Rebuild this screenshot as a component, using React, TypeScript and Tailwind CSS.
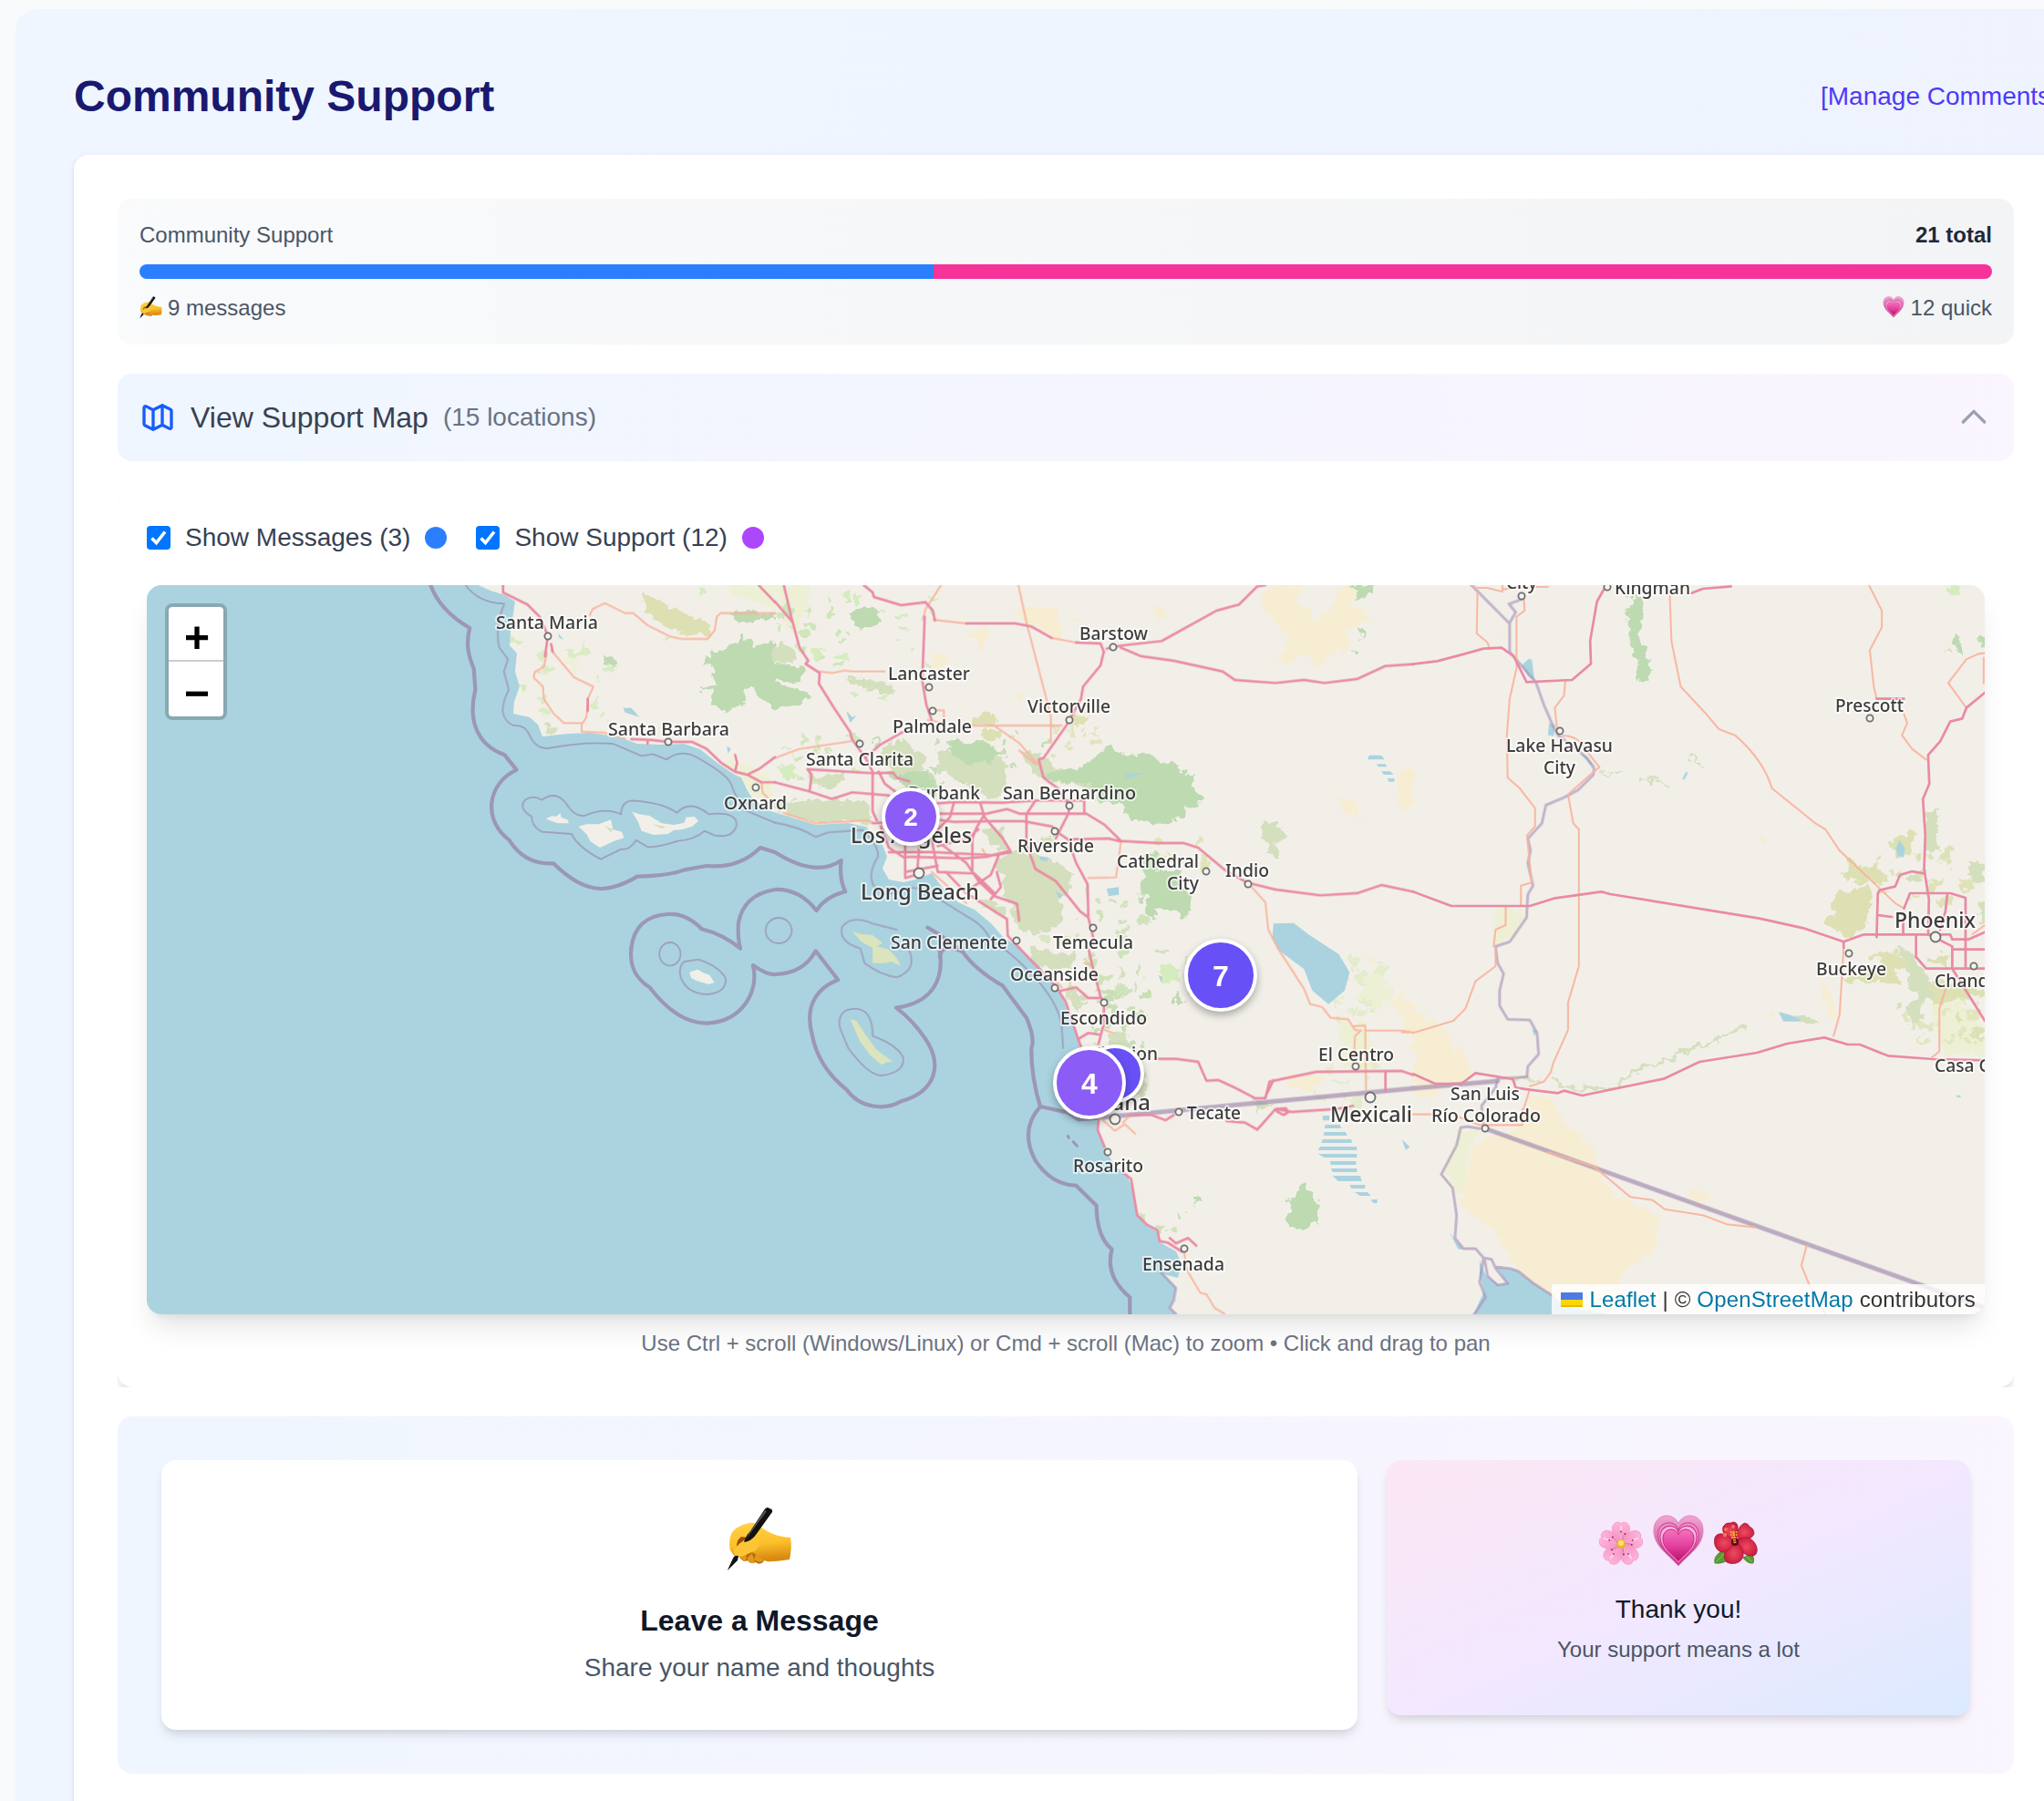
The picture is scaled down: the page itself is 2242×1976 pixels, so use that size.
import React from "react";

type Label = [text: string, x1: number, x2: number, baseline: number, size?: number];

const LABELS: Label[] = [
  ["Santa Maria", 544, 656, 689],
  ["Santa Barbara", 667, 800, 806],
  ["Oxnard", 794, 863, 887],
  ["Lancaster", 974, 1064, 745],
  ["Palmdale", 979, 1066, 803],
  ["Santa Clarita", 884, 1002, 839],
  ["Barstow", 1184, 1259, 701],
  ["Victorville", 1127, 1218, 781],
  ["San Bernardino", 1100, 1246, 876],
  ["Burbank", 996, 1075, 876],
  ["Los Angeles", 933, 1066, 924, 23],
  ["Riverside", 1116, 1200, 934],
  ["Long Beach", 944, 1074, 986, 23],
  ["Cathedral", 1225, 1315, 951],
  ["City", 1280, 1315, 975],
  ["Indio", 1344, 1392, 961],
  ["San Clemente", 977, 1105, 1040],
  ["Temecula", 1155, 1243, 1040],
  ["Oceanside", 1108, 1205, 1075],
  ["Escondido", 1163, 1258, 1123],
  ["El Cajon", 1197, 1270, 1162],
  ["Tijuana", 1178, 1262, 1217, 23],
  ["Tecate", 1302, 1361, 1227],
  ["Rosarito", 1177, 1254, 1285],
  ["Ensenada", 1253, 1343, 1393],
  ["El Centro", 1446, 1529, 1163],
  ["Mexicali", 1459, 1549, 1230, 23],
  ["San Luis", 1591, 1667, 1206],
  ["Río Colorado", 1570, 1690, 1230],
  ["Buckeye", 1992, 2069, 1069],
  ["Chandler", 2122, 2206, 1082],
  ["Casa Grande", 2122, 2238, 1175],
  ["Phoenix", 2078, 2167, 1017, 23],
  ["Prescott", 2013, 2088, 780],
  ["Lake Havasu", 1652, 1769, 824],
  ["City", 1693, 1728, 848],
  ["Kingman", 1771, 1854, 651],
  ["City", 1652, 1686, 645],
];

const TOWNS: [number, number, number?][] = [
  [601, 698], [733, 814], [829, 864], [1019, 754], [1023, 780], [943, 816], [1221, 710],
  [1173, 790], [1173, 884], [1157, 912], [1323, 956], [1369, 970], [1115, 1032], [1199, 1018],
  [1008, 958, 5.5], [1157, 1084], [1211, 1100], [1293, 1220], [1223, 1228, 5.5], [1215, 1264],
  [1299, 1370], [1487, 1170], [1503, 1204, 5.5], [1629, 1238], [2028, 1046], [2165, 1060],
  [2123, 1028, 5.5], [2051, 788], [1711, 802], [1763, 644], [1669, 654],
];

/* Areas sprinkled with small vegetation patches: x, y, width, height, count, colour */
const SCATTER: [number, number, number, number, number, string][] = [
  [590, 700, 90, 90, 16, "#dcebc6"],
  [850, 650, 90, 90, 22, "#cfe6b8"],
  [860, 800, 80, 60, 16, "#d4e6bd"],
  [920, 640, 110, 130, 14, "#d4ecbf"],
  [960, 800, 190, 70, 34, "#c8debb"],
  [1100, 920, 90, 140, 26, "#dbe6c4"],
  [1150, 760, 60, 90, 14, "#e2e4bf"],
  [1190, 960, 70, 170, 30, "#cfe3ba"],
  [1200, 1080, 60, 90, 18, "#c8dfb6"],
  [1270, 920, 60, 40, 8, "#e0e5b8"],
  [1280, 1040, 60, 60, 8, "#cfe3ba"],
  [1460, 1030, 60, 90, 22, "#e3eccb"],
  [1440, 1160, 70, 60, 14, "#e3eccb"],
  [2030, 930, 140, 60, 26, "#dfe2b8"],
  [2080, 1090, 90, 60, 22, "#e2e6bf"],
  [1240, 1330, 50, 30, 4, "#cfe3ba"],
];

const PATCHES = SCATTER.flatMap(([x, y, w, h, n, fill], region) => {
  let seed = 17 + region * 101;
  const next = () => {
    seed = (seed * 1103515245 + 12345) % 2147483648;
    return seed / 2147483648;
  };
  return Array.from({ length: n }, () => ({
    cx: x + next() * w,
    cy: y + next() * h,
    rx: 1.5 + next() * 5,
    ry: 1.5 + next() * 4,
    fill,
  }));
});

const NW = "translate(150 620) scale(0.44643 0.33333)";
const NC = "translate(850 620) scale(0.44643 0.33333)";
const NE = "translate(1550 620) scale(0.44133 0.33333)";
const SW = "translate(150 1040) scale(0.44643 0.33333)";
const SC = "translate(850 1040) scale(0.44643 0.33333)";
const SE = "translate(1550 1040) scale(0.44133 0.33333)";

function Land() {
  return (
    <g filter="url(#rough)">
      {/* sand */}
      <g fill="#f7edd3">
        <g transform={NC}>
          <path d="M600 140H700V200L708 240L680 235L640 200L585 170Z M482 210L520 205L525 260L500 285L485 250Z M385 290L425 295L420 330L388 335Z M930 135L962 150L960 180L930 165Z" />
          <path d="M1210 66H1290L1285 110L1320 180L1350 170L1395 66H1470L1440 100L1410 130L1465 180L1440 200L1400 215L1420 270L1380 290L1330 345L1310 290L1260 320L1230 310L1270 235L1235 200L1190 130Z" />
          <path d="M1525 690L1568 655V800L1540 810Z M1378 765L1420 775L1445 830L1400 815Z M590 425L610 430L605 450Z M720 165L745 185L725 190Z" />
        </g>
        <g transform={SC}>
          <path d="M1510 160L1545 150L1568 190V300L1545 290L1550 230L1520 190Z M1250 430L1345 415L1340 445L1300 468L1255 450Z M1460 30L1480 40L1465 60Z" />
        </g>
        <g transform={SE}>
          <path d="M0 205L65 260L105 320L150 410L110 445L40 490L0 495Z" />
          <path d="M290 490L350 500L365 560L390 610L408 595L450 680L470 760L520 830L612 880L608 1000L515 1070L505 1205H350L270 1070L200 940L115 845L140 690L170 630L275 590Z" />
          <path d="M680 810L710 795L750 830L720 840L690 825Z M870 220L905 200L890 235Z M1010 100L1040 130L1050 240L1030 210Z" />
        </g>
      </g>
      {/* farmland */}
      <g fill="#eef0d5">
        <g transform={NW}><path d="M1450 66H1568V150L1520 120L1470 100Z M1050 300L1090 310L1070 360Z M1440 640L1500 650L1560 700V800L1510 760Z" /></g>
        <g transform={NC}><path d="M0 66H90L60 200L40 240L20 160Z" /></g>
        <g transform={NE}><path d="M205 1130L280 1130L250 1230L200 1250Z M225 180L240 190L235 260Z M855 890L880 895L870 925Z" /></g>
        <g transform={SE}><path d="M110 600L165 610L130 700L125 820L100 780L75 745Z M1280 190L1360 170L1421 260V350H1320Z" /></g>
        <g transform={SC}><path d="M1470 60L1520 140L1490 200L1420 170Z M1380 240L1460 250L1470 420L1400 400Z" /></g>
      </g>
      {PATCHES.map((p, i) => (
        <ellipse key={i} {...p} />
      ))}
      {/* scrub */}
      <g fill="#d4dfbd">
        <g transform={NC}>
          <path d="M0 260L40 265L50 310L0 320Z M265 600L320 570L335 600L372 620L365 680L310 690L260 650Z M95 700L175 690L160 730L120 740L90 720Z M0 790L90 770L230 780L235 840L110 850L60 835L0 800Z" />
          <path d="M400 620L470 600L560 640L580 720L545 770L500 750L450 700L410 680Z M605 620L640 610L700 670L800 700L780 740L700 720L640 690Z M505 870L560 860L575 940L530 930Z M545 960L600 945L660 960L720 1000L730 1060L700 1100L705 1180L640 1220L600 1200L570 1100Z" />
          <path d="M640 900L700 905L690 935Z M480 1080L560 1120L570 1160L520 1130Z M1200 840L1230 850L1252 880L1230 920L1245 960L1225 965L1195 890Z M170 370L260 380L300 410L280 430L190 390Z" />
        </g>
        <g transform={SC}><path d="M620 0L700 20L740 10L730 60L680 80L630 40Z M720 100L760 160L750 210L720 180Z M820 280L860 270L870 320L830 330Z M870 380L910 400V500L880 480Z M1180 500L1225 510L1185 545Z M930 0L970 5L950 25Z M845 70L860 80L850 120Z" /></g>
        <g transform={NE}><path d="M1275 805H1303V940H1275Z M1370 985H1421V1050L1390 1040Z M1225 1020L1260 1015L1265 1040L1230 1045Z M1400 1100L1421 1110V1180H1405Z" /></g>
        <g transform={SE}><path d="M1205 0L1240 20L1280 100L1310 160L1260 180L1265 260L1245 250L1220 200L1250 160Z M1190 185L1215 190L1200 205Z M940 225L990 220L1010 260L980 250Z" /></g>
        <g transform={NW}><path d="M1005 525L1040 540L1010 550Z M1405 280L1450 290L1450 360L1415 350Z" /></g>
        <g fill="none" stroke="#d4dfbd" strokeWidth="3">
          <g transform={SE}><path d="M350 410L365 450L410 465L470 450L500 460L545 410L640 370L660 345L760 300L830 250M240 432H325" /></g>
          <g transform={NE}><path strokeWidth="2" d="M470 670L490 690H525M560 695L570 712L610 705L633 728M690 620L705 658H728" /></g>
        </g>
      </g>
      {/* military / olive */}
      <g fill="#dde0b2">
        <g transform={NW}><path d="M1250 80L1290 135L1340 150L1410 205L1405 238L1340 225L1280 195L1240 130Z" /></g>
        <g transform={NC}><path d="M485 495L545 500V530L485 525Z M515 540H550V580H515Z M720 480L780 500L760 540L735 520Z" /></g>
        <g transform={NE}><path d="M1190 900L1215 890L1250 875L1235 920L1210 960L1195 935Z M1045 1080L1135 1060V1170L1105 1210L1070 1220L1020 1180L1045 1160Z M1070 1020L1090 960L1105 1000L1155 975L1175 1040L1120 1050Z M1240 950L1265 960L1255 985Z M1325 275L1340 290L1330 300Z" /></g>
        <g transform={SE}><path d="M1140 20L1200 10L1235 60L1200 75L1205 120L1070 110L1085 85L1180 70Z M1270 50L1330 15V60Z M1290 100L1421 140V160L1340 170L1290 200Z M1380 265L1421 270V310Z M1360 210L1370 230L1355 245Z" /></g>
      </g>
      {/* forest */}
      <g fill="#bddab1">
        <g transform={NW}><path d="M1400 285L1450 270L1490 240L1530 265L1568 250V480L1500 400L1490 450L1455 485L1415 460L1420 420L1385 400L1420 400Z M1140 295L1175 305L1160 335Z M1465 150L1568 155V185L1480 180Z" /></g>
        <g transform={NC}>
          <path d="M0 325L50 320L75 350L65 375L20 380L0 370Z M0 390L60 410L100 435L60 450L0 470Z M185 150L240 140L255 160L250 190L220 215L190 200Z" />
          <path d="M425 580L500 580L545 600L540 640L480 660L440 640Z M650 690L740 670L780 640L815 598L860 625L930 630L985 665L1030 690L1025 730L1055 775L1010 800L990 840L935 855L870 835L850 790L790 775L770 720L680 715Z" />
          <path d="M905 945L940 940L935 1005H1000L998 1060L1025 1080L1015 1170L980 1130L940 1130L935 1165L912 1150V1100L898 1095Z M1415 66H1470L1460 95L1430 110Z M1435 205L1443 210V240H1435Z M1420 280L1432 285L1425 300Z" />
          <path d="M290 690L350 680L400 720L390 760L330 740Z" />
        </g>
        <g transform={SC}><path d="M1300 775L1318 800L1335 850V900L1320 925L1290 935L1262 900L1265 870L1260 820L1280 815Z M990 150L1010 180L975 180Z M1030 820L1050 830L1025 845Z M990 870L1005 872L998 885Z" /></g>
        <g transform={NE}><path d="M540 105H570L577 130L570 215L555 235L575 270L590 330L583 382L562 378L552 300L535 230Z M1345 230L1365 225L1360 295L1345 260Z M1405 240L1421 240V270Z" /></g>
      </g>
      <g fill="#d5ecbe">
        <g transform={NC}><path d="M90 270L118 275L115 310L90 315Z M150 290L180 290L178 320L152 318Z M165 90L185 90V108H168Z M60 700L20 690L40 670Z M0 670L40 650L30 690Z M185 660L210 670L200 690Z" /></g>
        <g transform={SC}><path d="M945 60L1000 65V105L950 118Z" /></g>
        <g transform={NE}><path d="M1325 68H1362L1355 98L1330 95Z" /></g>
        <g transform={NW}><path d="M915 240L950 245L935 265L915 262Z M940 395L960 400L945 430Z M1375 70L1400 90L1395 105L1378 90Z M1295 235L1310 240L1300 260Z" /></g>
      </g>
    </g>
  );
}

function Water() {
  return (
    <g fill="#aad3df">
      <path d="M525 642L538 648L554 653L565 660L563 673L560 693L559 708L567 717L565 737L570 753L564 770L563 783L581 787L590 795L595 808L623 805L646 804L677 808L699 816L726 817L750 816L768 822L788 838L806 850L813 853L820 868L826 877L846 890L872 898L895 905L930 903L950 907L957 915L968 927L973 940L968 953L975 965L991 968L1004 965L1022 958L1033 973L1051 990L1069 998L1087 1013L1100 1028L1118 1040L1140 1060L1158 1082L1169 1103L1178 1127L1185 1148L1186 1170L1192 1197L1203 1227L1205 1243L1212 1260L1223 1280L1236 1288L1243 1307L1247 1333L1258 1345L1270 1352L1272 1363L1290 1373L1296 1387L1292 1402L1276 1398L1290 1413L1287 1427L1283 1435L1290 1442H161V642Z" />
      <path d="M1617 1442L1623 1427L1628 1417L1623 1400V1383L1630 1400L1645 1410L1653 1408L1645 1395L1640 1390L1663 1394L1682 1408L1703 1422L1720 1434L1765 1442Z" />
      <g transform={NC}><path d="M1225 1180L1275 1178L1310 1215L1385 1280L1412 1340L1400 1400L1360 1445L1320 1400L1300 1330L1240 1270L1222 1230Z M650 958L672 962L668 975L652 972Z M815 1065L845 1060V1085L820 1090Z M690 1075L708 1085L700 1100Z M175 480L190 500L200 495L185 520Z M1460 626H1490L1498 640H1456Z M1478 655H1500L1504 664H1482Z M1490 679H1512L1520 690H1496Z M1505 702H1522V713H1508Z M860 690L915 682L890 692L860 702Z" /></g>
      <g transform={SC}><path d="M1346 552H1362V568H1346Z M1352 582H1388L1392 594H1350Z M1350 606H1402L1406 618H1348Z M1346 630H1416L1418 642H1342Z M1340 654H1430V666H1334Z M1334 678H1430V690H1350Z M1364 702H1428V714H1366Z M1366 726H1430V738H1370Z M1370 750H1438L1442 768H1384Z M1412 780H1450V792H1416Z M1424 804H1456L1464 816H1438Z M1464 828H1480V840H1470Z M1540 630L1560 655L1550 665Z M942 90L952 95L950 115Z" /></g>
      <g transform={NE}><path d="M288 308L295 312L302 380L285 365L270 330Z M338 520L352 525L350 562L335 560Z M678 680L683 684L675 705L668 706Z M1208 905L1222 930L1220 962L1205 960L1200 935Z M412 615L430 630L455 665L440 655Z" /></g>
      <g transform={SE}><path d="M908 210L935 220L963 235L960 242H920Z M296 265L308 275L300 290Z M90 935L104 960L125 992H112Z M1350 485H1360V492H1352Z" /></g>
      <g transform={NW}><path d="M1195 470L1215 470L1235 500L1200 485Z M1450 595L1460 605L1452 620Z M1035 225L1050 245L1038 240Z" /></g>
    </g>
  );
}

function Islands() {
  return (
    <g fill="#f2efe9">
      <g transform={NW}>
        <path d="M1005 835L1020 826L1030 828L1040 817L1044 832L1058 838L1062 850L1035 850L1020 843Z" />
        <path d="M1085 860L1105 853L1135 853L1165 838L1170 870L1192 878L1197 898L1170 910L1138 930L1115 910L1105 885Z" />
        <path d="M1217 812L1235 820L1260 825L1290 850L1320 855L1345 848L1350 830L1370 828L1380 842L1365 860L1340 870L1320 872L1305 885L1270 888L1240 875L1232 845Z" />
        <path d="M1150 858L1170 870L1165 880Z M1265 852L1300 862L1290 868Z" fill="#d4dfbd" />
      </g>
      <g transform={SW}><path d="M1358 80L1378 71L1392 82L1408 90L1419 114L1405 120L1375 108L1362 98Z" /></g>
      <g fill="#dbe4bd">
        <g transform={NC}><path d="M190 1205L212 1215L240 1218L265 1245L240 1260L212 1240Z" /></g>
        <g transform={SC}><path d="M240 -10L280 5L300 35L310 60L285 45L270 50L240 50Z M185 235L200 240L225 290L250 335L290 375L275 376L262 385L235 355L210 310Z" /></g>
      </g>
    </g>
  );
}

function Borders() {
  return (
    <g fill="none" strokeLinejoin="round" strokeLinecap="round">
      <g stroke="#9c97b6" strokeWidth="4.2">
        <g transform={NW}>
          <path d="M722 66Q745 150 818 207C808 260 815 300 828 340L832 410C815 500 830 590 904 625L933 674C860 720 850 840 915 905C945 970 985 985 1024 982C1060 1030 1100 1065 1140 1065Q1180 1065 1230 1025Q1310 1022 1345 1003L1400 990Q1480 1000 1532 930L1568 945" />
          <path d="M1568 1068Q1490 1085 1478 1180Q1476 1230 1483 1262Q1440 1215 1388 1198Q1350 1145 1305 1149Q1225 1155 1215 1260" />
        </g>
        <g transform={NC}>
          <path d="M0 945Q100 1030 163 972Q157 1030 173 1075Q125 1090 102 1137Q60 1065 0 1068" />
          <path d="M375 1193Q400 1210 460 1272Q410 1240 405 1290" />
        </g>
        <g transform={SW}><path d="M1215 0C1210 60 1225 100 1260 130C1300 200 1350 250 1403 248C1490 240 1530 140 1514 57Q1550 90 1568 87" /></g>
        <g transform={SC}>
          <path d="M0 87Q70 85 100 10L155 105C90 140 75 210 92 290C105 380 150 440 175 465C210 530 270 535 310 505C400 470 410 380 370 300Q340 240 298 197C390 180 415 100 405 10" />
          <path d="M460 10Q490 70 560 125Q590 180 618 230Q640 300 630 330Q630 430 652 522Q600 600 640 700Q680 780 740 782L790 848Q790 950 828 992Q810 1080 872 1150V1205" />
          <path d="M652 522L720 542L745 565L790 560" />
          <path strokeWidth="3" d="M720 620L722 625M733 638L742 652" />
        </g>
      </g>
      <g stroke="#9c97b6" strokeWidth="1.8" opacity=".85">
        <g transform={NW}>
          <path d="M808 66Q840 125 903 127Q880 200 890 270L912 310L902 350L914 410Q880 500 925 528Q955 525 965 560Q980 605 1010 603Q1100 580 1170 588L1240 628L1268 622L1302 640Q1340 600 1385 640Q1450 690 1460 720Q1475 780 1500 810L1568 848" />
          <path d="M970 828Q935 800 955 772Q975 755 995 773Q1030 740 1055 785Q1075 830 1100 825Q1150 795 1190 820Q1190 780 1215 775Q1290 780 1327 815Q1360 770 1405 820Q1475 810 1474 855Q1465 900 1420 890L1395 875Q1370 905 1330 908Q1280 930 1255 928L1227 905Q1210 940 1190 935L1140 968Q1085 930 1068 885L995 878Q970 860 970 828Z" />
          <ellipse cx="1577" cy="1203" rx="32" ry="42" />
        </g>
        <g transform={NC}>
          <path d="M0 848Q60 860 100 895L130 880L215 872Q255 920 253 960Q225 1020 245 1060Q270 1100 320 1065Q350 1055 380 1080L470 1155Q520 1190 530 1240" />
          <path d="M300 1200L240 1180Q190 1150 165 1190Q155 1240 210 1262L220 1310Q260 1350 300 1357Q350 1330 330 1270" />
        </g>
        <g transform={SW}>
          <ellipse cx="1310" cy="20" rx="26" ry="38" />
          <path d="M1345 45Q1330 60 1336 95Q1350 150 1403 153Q1450 145 1447 100Q1430 60 1380 38Z" />
        </g>
        <g transform={SC}>
          <path d="M560 0Q700 150 705 270L708 330" />
          <path d="M195 200Q150 205 160 265L180 330Q230 420 262 420Q320 410 315 360Q300 320 240 290Q240 200 195 200Z" />
        </g>
      </g>
      <g stroke="#a894b8" strokeWidth="3" opacity=".65">
        <g transform={NE}>
          <path d="M145 66L238 190" />
          <path d="M269 113L238 128L255 155L240 190V285L262 320L305 385L325 460L348 530L360 560L410 610L432 635L450 670L448 690L410 740L375 765L330 790L320 850L285 900L292 940L285 980L298 1055L285 1085L282 1160L240 1240L205 1255L210 1310L225 1345L215 1400V1450L235 1495L290 1497L308 1540L312 1610L285 1650L283 1685L210 1690" />
        </g>
        <g transform={SE}>
          <path d="M208 440L205 460L170 520L175 585M165 595L135 588L118 592L108 650L70 745L98 790L108 880L104 955L125 990L155 990L175 1020L165 1100L180 1150L152 1205M175 1020L195 1025L205 1055L235 1105L210 1110L185 1080L178 1030M205 1050L240 1055L262 1065L300 1105L347 1145" />
        </g>
        <g transform={SC}><path d="M950 1070L985 1120L980 1160L970 1185L985 1205" /></g>
      </g>
      <g stroke="#a58fb0" opacity=".72">
        <g transform={SC}><path strokeWidth="5" d="M790 560L1568 462" /></g>
        <g transform={SE}>
          <path strokeWidth="5" d="M0 462L210 438" />
          <path strokeWidth="5" d="M180 595L1421 1185" />
        </g>
      </g>
    </g>
  );
}

function Roads() {
  return (
    <g fill="none" strokeLinejoin="round" strokeLinecap="round">
      <g stroke="#f9b39c" strokeWidth="2.1" opacity=".9">
        <g transform={NW}>
          <path d="M1113 165L1120 145L1150 125L1200 158H1220L1255 198L1310 235L1340 243H1403L1420 215L1425 170L1435 158H1568" />
          <path d="M1008 290L1000 335L978 352L975 370L998 400L1000 440L1025 490L1050 520L1093 520V548L1150 552L1200 570M1018 280L1075 370L1122 400L1108 440L1105 500L1093 525M1535 715L1538 750L1550 765" />
        </g>
        <g transform={NC}>
          <path d="M408 66L370 145L363 180M390 180L470 192M598 66L620 200L665 430L678 500V585M110 350L140 355L170 347L190 350H270M680 240L740 255M385 478H415V520L375 510M485 528H705M540 530L600 585L645 655M0 635L60 605L120 593L185 580M20 815L100 850L225 840L240 845M510 935L520 960M850 910L838 1028L770 1030M1165 1050L1205 1110L1212 1200L1235 1260M385 1010L440 1075L470 1112M600 610L640 655" />
        </g>
        <g transform={SC}>
          <path d="M1235 0L1300 135L1315 185L1345 195L1365 230L1408 235L1425 270L1440 272L1425 290L1422 380M1420 258L1450 255L1452 470M1452 272H1540L1568 278M800 560L835 602L860 580L885 612M855 575L870 555M1005 1000L1012 1060L1045 1135L1060 1140L1080 1185L1105 1205M760 50L775 55M690 110L705 130M810 270L830 280M1540 278H1568" />
        </g>
        <g transform={NE}>
          <path d="M148 66L155 75H185L222 88V66M222 80L270 72H335M160 90L158 225L185 255L190 275M275 105L277 150L257 170V340L240 440L233 560L235 700L265 735L303 800V860L283 890L295 1045L268 1055V1120M378 385L375 430L352 470L358 540M372 562Q410 560 430 610L463 665L440 690L385 755L398 850L412 870V1320L385 1440L385 1530L348 1640L342 1670L325 1700L290 1715" />
          <path d="M638 100L642 250L665 400L725 485L760 540L800 560Q870 640 892 735L1000 850L1025 870L1060 940L1200 1115L1220 1130M1133 66L1165 150V205L1135 280L1145 400L1152 440M1220 490L1228 520L1215 560L1240 605L1275 640M1421 290L1405 292L1375 310L1330 388L1375 470M1418 305V390M230 1125V1185L205 1200L200 1255M1421 1185L1390 1215" />
        </g>
        <g transform={SE}>
          <path d="M205 0V60L155 110L130 200L100 240L0 280M290 465L275 530M0 548H50M110 555L165 583H272V530M1070 0L1060 220L1045 290M1325 130L1308 200V340L1290 360M335 672L450 720L540 820L595 830L625 860L720 880L780 910L850 920M978 980L965 1045L985 1110L1025 1205" />
        </g>
      </g>
      <g stroke="#ea8aa3" strokeWidth="2.7">
        <g transform={NW}>
          <path d="M900 66V90L960 130L990 170L1010 232L1003 300M1018 260L1022 285M1108 440V480M1528 66L1568 122M1215 573L1260 575L1306 582H1365L1400 605L1435 650L1470 680L1500 690L1535 715H1568M1500 690L1530 670L1568 632M1255 575V588M1470 625L1475 650L1470 680" />
        </g>
        <g transform={NC}>
          <path d="M22 66L40 170L60 270L82 315L75 325L110 355L108 390L145 470L185 550L190 575L225 640L240 680V810L250 840" />
          <path d="M0 120L42 185M218 66L240 90L243 105L310 132L370 122L388 150L393 182M470 192H590L630 202L680 240M740 255L800 258L808 285M815 275L850 265L950 250L1085 150L1140 130L1185 70L1205 66M850 272L900 300L980 315L1100 350L1130 378L1230 388L1300 378L1350 388L1430 375L1500 332L1568 326" />
          <path d="M808 285L800 330L757 400L752 440L715 530L660 635L648 640L660 700L695 735L722 790V815L690 900M368 170L362 380L372 460L385 510M320 545L260 590L225 630M0 715L85 745L140 770L190 748L280 758M85 745L90 690L80 672L240 685L290 683L300 700L330 712" />
          <path d="M255 680L270 720L300 750L350 790L440 780L560 782L640 775H760V818M400 818L520 818L570 803L600 818H765L810 855L850 908L940 915H1005L1040 930L1105 1003L1160 1045L1230 1068L1340 1087L1430 1080L1490 1053L1568 1075M400 838L440 845L540 843H610L680 860L700 885L720 903L820 900L850 910" />
          <path d="M505 785L515 830L560 900L578 940L520 960L470 965L320 960M440 780L430 830L400 870M640 775L618 820V920L640 1000L690 1040L750 1140L770 1160L782 1225M720 903L740 980L768 1050L770 1155M515 820L495 865L485 900V1010M260 860L280 930L320 965V1030L345 1020M280 945H390L540 955L580 945M355 920L350 1000M385 900L400 1010L490 1015L540 1080M400 910L470 980L500 1040L540 1090L595 1115L600 1170M420 1010L470 1080L540 1140L570 1165L572 1220L600 1260M550 955L530 1020L480 1065M545 1010L555 1060L530 1100M320 910V1010L400 990M240 850L290 845L330 870M500 870L470 900L400 925" />
        </g>
        <g transform={SC}>
          <path d="M600 0L650 70L690 125L715 180L745 300L752 325M770 0L780 60L800 160L808 190V250L795 315M698 142L740 130L770 165H800M745 300L770 280L795 285M940 365H985L1040 375L1060 437L1090 435L1130 460L1180 495H1205L1215 440L1330 408L1540 405L1568 418M1205 490L1225 435M1500 405V470M870 550L925 550L960 567L980 550M1110 570L1155 575L1185 598L1230 530L1270 540L1380 530L1420 520M1230 530L1255 528L1262 540L1250 550L1235 540ZM795 570L793 600L810 655M855 740L875 760L890 880L915 912L940 930L945 965L965 970L1000 1000M970 955L985 972L1015 955L1035 980" />
        </g>
        <g transform={NE}>
          <path d="M0 326L60 316L120 295L175 275L220 272L250 300L282 385L395 378L442 325L440 250L457 120L480 66M692 92L720 78L790 70M0 1075L95 1122H290L350 1097L468 1075L490 1083L860 1163L970 1195L1070 1240L1120 1216H1335L1340 1232H1380L1421 1208M1070 1240V1260M1152 440H1220" />
          <path d="M1421 420L1375 470L1365 505L1335 515L1310 580L1280 625L1283 720L1267 770L1273 890L1270 1000L1282 1100L1280 1218M1270 1015L1240 1008L1210 1020L1198 1058L1160 1070L1155 1080L1152 1225M1220 1130L1235 1080H1335L1373 1095V1240M1328 1080L1323 1140L1310 1200M1155 1152L1190 1158M1218 1165V1216M1250 1220V1290L1275 1328H1421M1285 1218L1340 1255V1328M1340 1265H1421M1373 1235V1328M1340 1328L1421 1500" />
        </g>
        <g transform={SE}>
          <path d="M0 415L55 447H120L155 412L248 432L255 460L290 467L360 478L375 470L420 486L625 430L712 375L855 345L930 315L1022 295L1080 318H1110L1180 355L1290 366L1421 370" />
        </g>
      </g>
    </g>
  );
}

function MapCanvas() {
  return (
    <svg
      viewBox="161 642 2016 800"
      className="block h-full w-full [&_ellipse]:[vector-effect:non-scaling-stroke] [&_path]:[vector-effect:non-scaling-stroke]"
    >
      <defs>
        <filter id="rough" filterUnits="userSpaceOnUse" x="161" y="642" width="2016" height="800">
          <feTurbulence type="fractalNoise" baseFrequency="0.09" numOctaves="3" seed="4" />
          <feDisplacementMap in="SourceGraphic" scale="17" xChannelSelector="R" yChannelSelector="G" />
        </filter>
      </defs>
      <rect x="161" y="642" width="2016" height="800" fill="#f2efe9" />
      <Land />
      <Water />
      <Islands />
      <Borders />
      <Roads />
      <g fill="#f5f3ef" stroke="#6f6f6f" strokeWidth="1.8">
        {TOWNS.map(([x, y, r], i) => (
          <circle key={i} cx={x} cy={y} r={r ?? 3.6} />
        ))}
      </g>
      <g className="font-['Noto_Sans',sans-serif] font-medium">
        {LABELS.map(([text, x1, x2, y, size], i) => (
          <text
            key={i}
            x={x1}
            y={y + 0.7}
            fontSize={size ?? 19.8}
            textLength={x2 - x1}
            lengthAdjust="spacingAndGlyphs"
            fill="#3c3c3c"
            stroke="#fff"
            strokeOpacity=".65"
            strokeWidth="4"
            strokeLinejoin="round"
            className="[paint-order:stroke]"
          >
            {text}
          </text>
        ))}
      </g>
    </svg>
  );
}

function WritingHand({ className }: { className: string }) {
  return (
    <svg viewBox="0 0 72 72" className={className}>
      <defs>
        <linearGradient id="skin" x1="0" y1="0" x2="0.15" y2="1">
          <stop offset="0" stopColor="#ffd24a" />
          <stop offset="0.6" stopColor="#fcc02a" />
          <stop offset="1" stopColor="#d98a12" />
        </linearGradient>
      </defs>
      <path d="M14 55q4 7 9 4 3 5 9 2 4 4 9-1l-4-9-20-2z" fill="#b5690c" />
      <path d="M15 55q3 6 6 5l1-8zM22 57q5 7 9 4l-3-10zM30 58q6 5 11 1l-8-9z" fill="#e39a1c" />
      <path d="M4 48C2 40 4 32 6 28 11 22 19 19 25 18c6-1 9 1 13 5 8 5 16 10 32 11q2 11-1 24c-8 1-19 3-25 2-6-1-12-8-16-10-6 3-12 5-16 6-4-1-5-4-8-8z" fill="url(#skin)" />
      <path d="M11 47c3-7 7-9 12-13l-7-1c-5 4-5 8-5 14z" fill="#9a4e08" />
      <path d="M8 48c5-9 15-14 26-16 4 8 1 17-7 18-6 2-10 5-15 6-3-2-4-4-4-8z" fill="#fdc535" />
      <path d="M41 4q3-5 6-2 4 1 3 4L32 31q-5 7-13 8 2-7 7-12z" fill="#111" />
      <path d="M42 4L26 27l-5 9 23-31z" fill="#555" />
      <path d="M12 54L1 70 7 57q2-4 5-3z" fill="#151515" />
      <path d="M8 55l5-1-1 5L1 70z" fill="#111" />
    </svg>
  );
}

function GrowingHeart({ className }: { className: string }) {
  const heart = "M30 58C20 46 2 36 2 18 2 7 9 1 17 1c6 0 11 4 13 9 2-5 7-9 13-9 8 0 15 6 15 17 0 18-18 28-28 40z";
  return (
    <svg viewBox="0 0 60 60" className={className}>
      <defs>
        <linearGradient id="core" x1="0" y1="0" x2="0" y2="1">
          <stop offset="0" stopColor="#f772bd" />
          <stop offset="0.55" stopColor="#e13c9c" />
          <stop offset="1" stopColor="#bb1263" />
        </linearGradient>
        <linearGradient id="halo" x1="0" y1="0" x2="0" y2="1">
          <stop offset="0" stopColor="#efa6d3" />
          <stop offset="1" stopColor="#c43a83" />
        </linearGradient>
      </defs>
      <path d={heart} fill="url(#halo)" stroke="#dd86bb" strokeWidth="1" />
      <path d={heart} fill="#e88fc6" stroke="#cf3f95" strokeWidth="1.3" transform="translate(5.1 8.2) scale(.83)" />
      <path d={heart} fill="#f5b5dc" stroke="#cf2e8c" strokeWidth="1.5" transform="translate(7.8 12) scale(.74)" />
      <path d={heart} fill="url(#core)" stroke="#c81f7c" strokeWidth="1.6" transform="translate(11.1 16) scale(.63)" />
    </svg>
  );
}

const PETAL_ANGLES = [0, 72, 144, 216, 288];

function Blossom({ className }: { className: string }) {
  return (
    <svg viewBox="0 0 48 48" className={className}>
      <defs>
        <linearGradient id="petal" x1="0" y1="0" x2="0" y2="1">
          <stop offset="0" stopColor="#ffb4d8" />
          <stop offset="1" stopColor="#f48fc4" />
        </linearGradient>
      </defs>
      {PETAL_ANGLES.map((a) => (
        <g key={a} transform={`rotate(${a} 24 25)`}>
          <path d="M24 25C16 19 13 11 15 5q2-4 6-4l3 1.500 3-1.500q4 0 6 4c2 6-1 14-9 20z" fill="url(#petal)" stroke="#ee8fc0" strokeWidth=".6" />
          <path d="M24 20V5" stroke="#ffd3e8" strokeWidth="2" />
          <path d="M24 22V12M24 22l4-8" stroke="#d95e9b" strokeWidth=".7" />
          <circle cx="24" cy="11.500" r=".9" fill="#8c1f4f" />
          <circle cx="28.500" cy="14" r=".9" fill="#8c1f4f" />
        </g>
      ))}
      <circle cx="24" cy="25" r="5" fill="#f0b32c" />
      <circle cx="24" cy="24" r="3" fill="#ffe071" />
    </svg>
  );
}

function Hibiscus({ className }: { className: string }) {
  return (
    <svg viewBox="0 0 48 48" className={className}>
      <defs>
        <radialGradient id="red" cx=".5" cy=".5" r=".6">
          <stop offset="0" stopColor="#ee4a62" />
          <stop offset="1" stopColor="#c41839" />
        </radialGradient>
      </defs>
      <path d="M10 32Q-1 38 1 46q9 1 15-4zM32 40q5 7 11 6 2-7-3-10z" fill="#5b9b35" stroke="#3d7a24" strokeWidth=".8" />
      <path d="M2 45l9-9M42 45l-6-6" stroke="#8cc25b" strokeWidth="1" />
      <g fill="url(#red)" stroke="#a81131" strokeWidth=".7">
        <path d="M22 22C14 20 8 13 10 6q3-5 8-4 6-3 8 3 1 9-4 17z" />
        <path d="M23 22C24 12 28 4 34 2q4 1 5 4 5 2 5 8-3 6-10 6z" />
        <path d="M24 22c8-6 15-5 20 1 5 6 4 14-1 15-8 1-16-5-19-16z" />
        <path d="M22 24c8 0 11 8 10 15-3 8-12 9-18 6-5-5-3-17 8-21z" />
        <path d="M22 22C14 13 4 11 1 18c-2 8 2 15 8 16 7-1 11-5 13-12z" />
      </g>
      <circle cx="23" cy="23" r="4" fill="#5e0820" />
      <path d="M23 24l-2-13" stroke="#e9b51d" strokeWidth="3" strokeDasharray="1.500 1" />
      <path d="M18 12h8M18 15h8M19 18h7" stroke="#f7cf28" strokeWidth="1.400" strokeDasharray="1.500 1.500" />
      <g fill="#f66f62"><circle cx="13" cy="9" r="2" /><circle cx="21" cy="6" r="2" /><circle cx="12" cy="15" r="2.200" /></g>
    </svg>
  );
}

function Check({ label, dot }: { label: string; dot: string }) {
  return (
    <label className="flex items-center gap-4">
      <span className="flex size-[26px] items-center justify-center rounded-[4px] bg-[#0075ff]">
        <svg viewBox="0 0 26 26" className="size-[26px]" fill="none" stroke="#fff" strokeWidth="3.600">
          <path d="M5.500 13.500l5 5L20 6.500" />
        </svg>
      </span>
      <span className="text-[28px] leading-10 text-gray-700">{label}</span>
      <span className={`size-6 rounded-full ${dot}`} />
    </label>
  );
}

function Cluster({ count, className }: { count?: number; className: string }) {
  return (
    <div className={`absolute flex items-center justify-center rounded-full border-4 border-white font-bold text-white shadow-[0_4px_8px_rgba(0,0,0,0.3)] ${className}`}>
      {count}
    </div>
  );
}

function SupportMap() {
  return (
    <div className="relative h-[800px] overflow-hidden rounded-2xl">
      <MapCanvas />
      <Cluster className="left-[1030px] top-[504px] size-16 bg-[#6650f6]" />
      <Cluster count={2} className="left-[806px] top-[222px] size-16 bg-[#8b5cf6] pt-0.5 text-[28px]" />
      <Cluster count={7} className="left-[1138px] top-[388px] size-20 bg-[#6650f6] pt-0.5 text-[32px]" />
      <Cluster count={4} className="left-[994px] top-[506px] size-20 bg-[#8b5cf6] pt-0.5 text-[32px]" />

      <div className="absolute left-5 top-5 flex flex-col overflow-hidden rounded-lg border-4 border-black/20 bg-white bg-clip-padding font-['Liberation_Sans',sans-serif] text-[48px] font-bold text-black">
        <span className="flex h-[60px] w-[60px] items-center justify-center border-b-2 border-[#ccc] pl-0.5 pt-[9px] leading-none">+</span>
        <span className="flex h-[60px] w-[60px] items-center justify-center pl-0.5 pt-[9px] leading-none">−</span>
      </div>

      <div className="absolute bottom-0 right-0 flex h-[33px] items-center bg-white/80 px-[10px] text-[24px] leading-[33px] tracking-[0.16px] text-[#333]">
        <span className="mr-[7px] flex h-4 w-6 flex-col">
          <span className="h-2 bg-[#4c7be1]" />
          <span className="h-1.5 bg-[#ffd500]" />
          <span className="h-0.5 bg-[#e0bc00]" />
        </span>
        <span className="whitespace-pre">
          <span className="text-[#0078a8]">Leaflet</span> | © <span className="text-[#0078a8]">OpenStreetMap</span> contributors
        </span>
      </div>
    </div>
  );
}

export default function App() {
  return (
    <div className="h-[1976px] w-full overflow-hidden bg-gray-50 pl-[17px] pt-[10px] font-['Liberation_Sans',Arial,sans-serif]">
      <div className="h-[2400px] w-[2328px] rounded-3xl bg-[linear-gradient(105deg,#eff6ff_20%,#eef2ff)] px-16 pt-16">
        <header className="flex h-16 items-center justify-between">
          <h1 className="text-[48px] font-bold leading-[64px] text-[#191970]">Community Support</h1>
          <a className="w-[284px] whitespace-nowrap text-[28px] text-indigo-600">[Manage Comments]</a>
        </header>

        <main className="mt-8 h-[2200px] rounded-2xl bg-white pl-12 pt-12 shadow-[0_2px_6px_rgba(0,0,0,0.1),0_2px_4px_-2px_rgba(0,0,0,0.1)]">
          <div className="flex w-[2080px] flex-col gap-8">
            <section className="flex h-40 flex-col gap-4 rounded-2xl bg-linear-to-r from-gray-50 to-gray-100 p-6 text-[24px] leading-8 text-gray-600">
              <div className="flex justify-between">
                <span>Community Support</span>
                <span className="font-bold text-gray-800">21 total</span>
              </div>
              <div className="flex h-4 overflow-hidden rounded-full">
                <div className="bg-[#2b7fff]" style={{ width: `${(9 / 21) * 100}%` }} />
                <div className="flex-1 bg-[#f6339a]" />
              </div>
              <div className="flex justify-between">
                <span className="flex items-center gap-1.5">
                  <WritingHand className="-mt-0.5 size-[25px]" />9 messages
                </span>
                <span className="flex items-center gap-[7px]">
                  <GrowingHeart className="-mt-0.5 size-6" />12 quick
                </span>
              </div>
            </section>

            <section>
              <div className="flex h-24 items-center rounded-2xl bg-linear-to-r from-blue-50 to-purple-50 px-6">
                <svg viewBox="0 0 24 24" className="size-10 text-blue-600" fill="none" stroke="currentColor" strokeWidth="2" strokeLinecap="round" strokeLinejoin="round">
                  <path d="M9 20l-5.447-2.724A1 1 0 013 16.382V5.618a1 1 0 011.447-.894L9 7m0 13l6-3m-6 3V7m6 10l4.553 2.276A1 1 0 0021 18.382V7.618a1 1 0 00-.553-.894L15 4m0 13V4m0 0L9 7" />
                </svg>
                <span className="ml-4 text-[32px] text-gray-700">View Support Map</span>
                <span className="ml-4 text-[28px] text-gray-500">(15 locations)</span>
                <svg viewBox="0 0 24 24" className="ml-auto size-10 text-gray-400" fill="none" stroke="currentColor" strokeWidth="2" strokeLinecap="round" strokeLinejoin="round">
                  <path d="M5 15l7-7 7 7" />
                </svg>
              </div>

              <div className="overflow-hidden pt-8">
                <div className="rounded-2xl bg-white p-8 shadow-[0_8px_12px_-2px_rgba(0,0,0,0.1),0_4px_8px_-4px_rgba(0,0,0,0.1)]">
                  <div className="flex gap-8">
                    <Check label="Show Messages (3)" dot="bg-[#2b7fff]" />
                    <Check label="Show Support (12)" dot="bg-[#ad46ff]" />
                  </div>
                  <div className="mt-8 rounded-2xl shadow-[0_20px_30px_-6px_rgba(0,0,0,0.1),0_8px_12px_-8px_rgba(0,0,0,0.1)]">
                    <SupportMap />
                  </div>
                  <p className="mt-4 text-center text-[24px] leading-8 text-gray-500">
                    Use Ctrl + scroll (Windows/Linux) or Cmd + scroll (Mac) to zoom • Click and drag to pan
                  </p>
                </div>
              </div>
            </section>

            <section className="grid grid-cols-3 items-start gap-8 rounded-2xl bg-linear-to-r from-blue-50 to-purple-50 p-12 text-center">
              <div className="col-span-2 flex h-[296px] flex-col items-center rounded-2xl bg-white py-12 shadow-[0_8px_12px_-2px_rgba(0,0,0,0.1),0_4px_8px_-4px_rgba(0,0,0,0.1)]">
                <WritingHand className="mt-[3px] size-[72px]" />
                <h2 className="mt-[29px] text-[32px] font-bold leading-[48px] text-gray-900">Leave a Message</h2>
                <p className="mt-2 text-[28px] leading-10 text-gray-600">Share your name and thoughts</p>
              </div>
              <div className="flex h-[280px] flex-col items-center rounded-2xl bg-linear-to-br from-pink-100 via-purple-100 to-blue-100 pt-14 shadow-[0_8px_12px_-2px_rgba(0,0,0,0.1),0_4px_8px_-4px_rgba(0,0,0,0.1)]">
                <div className="flex h-16 items-center gap-2.5">
                  <Blossom className="mt-1.5 size-12" />
                  <GrowingHeart className="mt-0.5 size-[58px]" />
                  <Hibiscus className="mt-1.5 size-12" />
                </div>
                <h3 className="mt-6 text-[28px] leading-10 text-gray-900">Thank you!</h3>
                <p className="mt-2 text-[24px] leading-8 text-gray-600">Your support means a lot</p>
              </div>
            </section>
          </div>
        </main>
      </div>
    </div>
  );
}
